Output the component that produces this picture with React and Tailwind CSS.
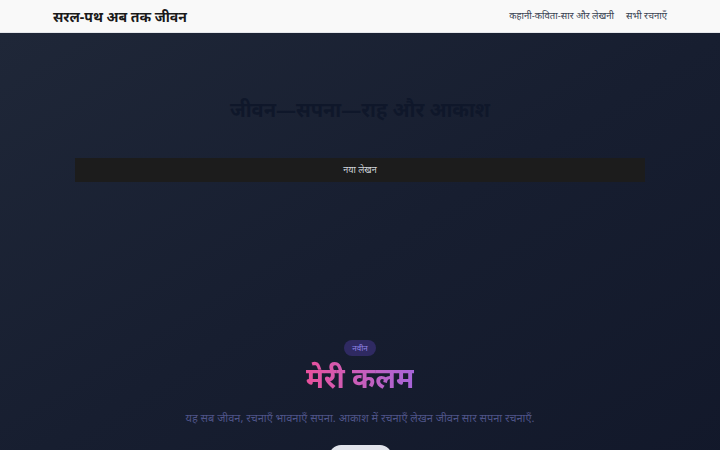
import React from "react";

export default function App() {
  return (
    <div className="w-[720px] h-[450px] overflow-hidden flex flex-col" style={{ fontFamily: '"Noto Sans", sans-serif' }}>
      <header className="h-[33px] shrink-0 bg-[#f9f9f9] flex items-center justify-between px-[53px] border-b border-[#e5e7eb]">
        <div className="text-[14px] font-bold text-[#1a1a1a]">सरल-पथ अब तक जीवन</div>
        <nav className="flex items-center gap-3 text-[9.5px] text-[#374151]">
          <span>कहानी-कविता-सार और लेखनी</span>
          <span>सभी रचनाएँ</span>
        </nav>
      </header>
      <main className="flex-1 bg-gradient-to-br from-[#1f2738] via-[#171e30] to-[#12182a] flex flex-col items-center">
        <h1 className="mt-[62px] text-[20px] font-bold text-[#0f172a]">जीवन—सपना—राह और आकाश</h1>
        <div className="mt-[33px] w-[570px] h-[24px] bg-[#1c1c1c] flex items-center justify-center text-[9px] text-[#d1d5db]">नया लेखन</div>
        <div className="mt-[158px] rounded-full bg-[#2f2a62] px-2 py-[2px] text-[8px] text-[#8f83e6]">नवीन</div>
        <h2 className="mt-0 text-[28px] font-bold bg-gradient-to-r from-[#e8509c] to-[#a664d8] bg-clip-text text-transparent">मेरी कलम</h2>
        <p className="mt-[12px] text-[11px] text-[#4f5489]">यह सब जीवन, रचनाएँ भावनाएँ सपना. आकाश में रचनाएँ लेखन जीवन सार सपना रचनाएँ.</p>
        <button className="mt-[18px] w-[63px] h-[30px] rounded-xl bg-[#e2e4ec] shrink-0"></button>
      </main>
    </div>
  );
}
